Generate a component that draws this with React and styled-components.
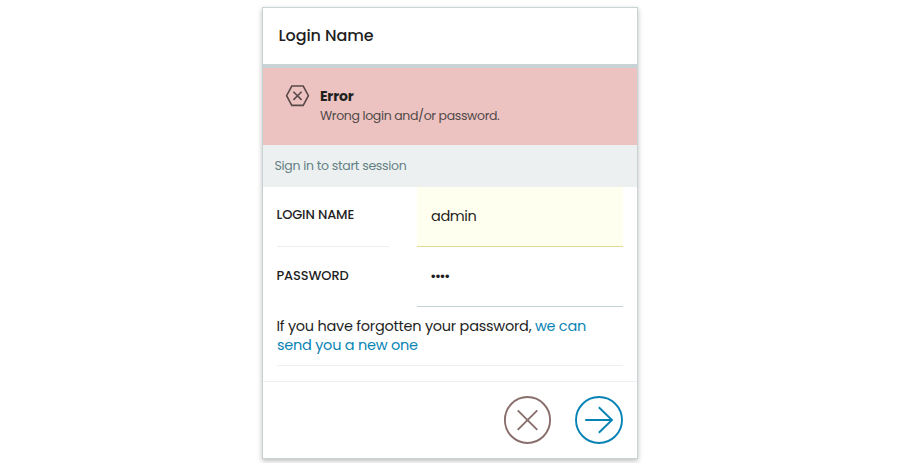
import React from "react";
import styled, { createGlobalStyle } from "styled-components";

const GlobalStyle = createGlobalStyle`
  * { box-sizing: border-box; }
  body { margin: 0; background: #fff; color: #1f1f1f; font-family: Poppins, Inter, sans-serif; }
`;

const Page = styled.main`
  display: flex;
  justify-content: center;
  height: 463px;
  padding-top: 7px;
  overflow: hidden;
`;

const Card = styled.form`
  display: flex;
  flex-direction: column;
  width: 376px;
  height: 452px;
  border: 1px solid #c8d3d6;
  background: #fff;
  box-shadow: 0 2px 5px rgba(0, 0, 0, 0.26);
`;

const Header = styled.header`
  height: 60px;
  padding: 16px 15.5px 0;
  border-bottom: 4px solid #c8d3d6;
`;

const Title = styled.h1`
  margin: 0;
  font-size: 16px;
  line-height: 24px;
  font-weight: 500;
  letter-spacing: -0.08px;
`;

const Alert = styled.section`
  display: flex;
  gap: 10px;
  height: 77px;
  padding: 16px 22px 0;
  background: #ecc3c1;
`;

const AlertTitle = styled.h2`
  margin: 3px 0 0;
  font-size: 14px;
  line-height: 19px;
  font-weight: 700;
  letter-spacing: -0.2px;
`;

const AlertText = styled.p`
  margin: 1px 0 0;
  color: #504848;
  font-size: 12.5px;
  line-height: 18px;
  letter-spacing: -0.36px;
`;

const Notice = styled.p`
  margin: 0;
  height: 42px;
  padding-left: 11.5px;
  background: #ecf0f1;
  color: #637f83;
  font-size: 12.5px;
  line-height: 42px;
  letter-spacing: -0.29px;
`;

const Field = styled.div`
  display: grid;
  grid-template-columns: 112px 206px;
  column-gap: 28px;
  height: 60px;
  padding-left: 14px;
`;

const Label = styled.label`
  border-bottom: 1px solid ${(p) => (p.$ruled ? "#eceff0" : "transparent")};
  font-size: 13px;
  line-height: ${(p) => (p.$ruled ? 56 : 58)}px;
  font-weight: 500;
  letter-spacing: -0.13px;
  text-indent: -0.5px;
`;

const Input = styled.input`
  width: 100%;
  height: 60px;
  margin: 0;
  padding: 0 14px;
  border: 0;
  border-bottom: 1px solid ${(p) => (p.$filled ? "#e2da94" : "#c2d2d6")};
  border-radius: 0;
  outline: 0;
  background: ${(p) => (p.$filled ? "#ffffef" : "#fff")};
  color: #1f1f1f;
  font-family: inherit;
  font-size: 14.5px;
  letter-spacing: ${(p) => (p.$filled ? -0.4 : -1.35)}px;
  text-indent: ${(p) => (p.$filled ? 0 : -0.7)}px;
`;

const Help = styled.p`
  margin: 0 14px;
  height: 59px;
  padding-top: 10px;
  border-bottom: 1px solid #eceff0;
  font-size: 14.5px;
  line-height: 19px;
  letter-spacing: -0.26px;
  white-space: nowrap;
  text-indent: -0.5px;
`;

const Link = styled.a`
  color: #0a84b5;
  text-decoration: none;
`;

const Footer = styled.footer`
  display: flex;
  justify-content: flex-end;
  gap: 23px;
  margin-top: 15px;
  padding: 14px 13px 0;
  border-top: 1px solid #eceff0;
`;

const RoundButton = styled.button`
  width: 49px;
  height: 49px;
  padding: 0;
  border: 0;
  background: none;
  color: ${(p) => p.$color};
`;

const Icon = styled.svg`
  display: block;
  flex: none;
  fill: none;
  stroke: currentColor;
  stroke-width: ${(p) => p.$weight};
`;

export default function App() {
  return (
    <>
      <GlobalStyle />
      <Page>
        <Card>
          <Header>
            <Title>Login Name</Title>
          </Header>
          <Alert>
            <Icon $weight={1.6} width="25" height="24" viewBox="0 0 25 24" color="#594a4a">
              <path d="M6.8 2H18.2L23.4 11.7L18.2 21.4H6.8L1.6 11.7ZM8.4 7.7L16.6 15.9M16.6 7.7L8.4 15.9" />
            </Icon>
            <div>
              <AlertTitle>Error</AlertTitle>
              <AlertText>Wrong login and/or password.</AlertText>
            </div>
          </Alert>
          <Notice>Sign in to start session</Notice>
          <Field>
            <Label htmlFor="login" $ruled>LOGIN NAME</Label>
            <Input id="login" defaultValue="admin" $filled />
          </Field>
          <Field>
            <Label htmlFor="password">PASSWORD</Label>
            <Input id="password" type="password" defaultValue="pass" />
          </Field>
          <Help>
            If you have forgotten your password, <Link>we can<br />send you a new one</Link>
          </Help>
          <Footer>
            <RoundButton type="button" aria-label="Cancel" $color="#886e6c">
              <Icon $weight={1.9} width="49" height="49" viewBox="0 0 49 49">
                <ellipse cx="24.5" cy="24" rx="22.6" ry="23" />
                <path d="M14.7 14.3L34.3 33.9M34.3 14.3L14.7 33.9" />
              </Icon>
            </RoundButton>
            <RoundButton type="submit" aria-label="Sign in" $color="#0782b4">
              <Icon $weight={1.9} width="49" height="49" viewBox="0 0 49 49">
                <circle cx="24" cy="24" r="23" />
                <path d="M10.2 24H37M23.8 11.2L37 24L23.8 36.8" />
              </Icon>
            </RoundButton>
          </Footer>
        </Card>
      </Page>
    </>
  );
}
